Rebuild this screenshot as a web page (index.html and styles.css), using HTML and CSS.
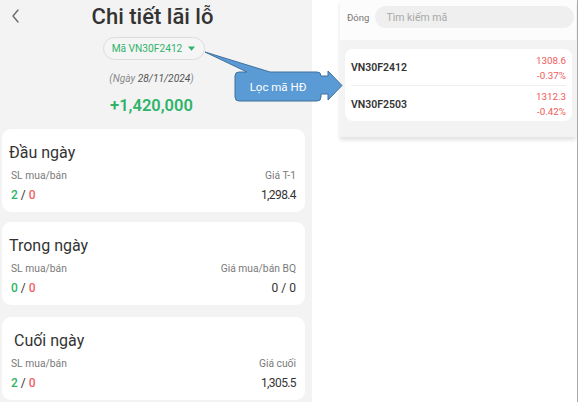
FILE: index.html
```html
<!DOCTYPE html>
<html lang="vi">
<head>
<meta charset="utf-8">
<title>Chi tiết lãi lỗ</title>
<link rel="stylesheet" href="styles.css">
</head>
<body>
<div class="page">
  <section class="left">
    <header class="head">
      <svg class="back" width="12" height="16" viewBox="0 0 12 16"><polyline points="8,1 3,7 8,13" fill="none" stroke="#6b6b6b" stroke-width="1.4" stroke-linecap="round" stroke-linejoin="round"/></svg>
      <h1 class="title">Chi tiết lãi lỗ</h1>
      <span class="spacer"></span>
    </header>
    <div class="pill-row">
      <div class="pill">Mã VN30F2412 <svg class="caret" width="7" height="5" viewBox="0 0 7 5"><polygon points="0,0.5 7,0.5 3.5,4.8" fill="#2fb36b"/></svg></div>
    </div>
    <p class="date">(Ngày <span class="date-val">28/11/2024</span>)</p>
    <p class="amount">+1,420,000</p>

    <div class="cards">
      <div class="card">
        <div class="card-title">Đầu ngày</div>
        <div class="row labels"><span>SL mua/bán</span><span>Giá T-1</span></div>
        <div class="row values"><span><b class="g">2</b> / <b class="r">0</b></span><span class="num">1,298.4</span></div>
      </div>
      <div class="card">
        <div class="card-title">Trong ngày</div>
        <div class="row labels"><span>SL mua/bán</span><span>Giá mua/bán BQ</span></div>
        <div class="row values"><span><b class="g">0</b> / <b class="r">0</b></span><span>0 / 0</span></div>
      </div>
      <div class="card card-last">
        <div class="card-title indent">Cuối ngày</div>
        <div class="row labels"><span>SL mua/bán</span><span>Giá cuối</span></div>
        <div class="row values"><span><b class="g">2</b> / <b class="r">0</b></span><span class="num">1,305.5</span></div>
      </div>
    </div>
  </section>

  <section class="right">
    <div class="search-bar">
      <span class="close">Đóng</span>
      <div class="search">Tìm kiếm mã</div>
    </div>
    <div class="list-wrap">
      <div class="list">
        <div class="item">
          <span class="code">VN30F2412</span>
          <div class="price"><span>1308.6</span><span>-0.37%</span></div>
        </div>
        <div class="item">
          <span class="code">VN30F2503</span>
          <div class="price"><span>1312.3</span><span>-0.42%</span></div>
        </div>
      </div>
    </div>
  </section>

  <div class="callout">
    <svg width="146" height="58" viewBox="0 0 146 58">
      <path d="M39,24 L47,24 L5,4 L70,24 L117,24 Q121,24 121,28 L128,28 L128,23 L142,37.5 L128,52 L128,46 L121,46 L121,49 Q121,53 117,53 L39,53 Q35,53 35,49 L35,28 Q35,24 39,24 Z" fill="#5b9bd5" stroke="#41719c" stroke-width="1"/>
    </svg>
    <span class="callout-text">Lọc mã HĐ</span>
  </div>
</div>
</body>
</html>
```

FILE: styles.css
```css
* { box-sizing: border-box; }
html, body { margin: 0; padding: 0; }
body {
  font-family: Roboto, "Noto Sans", sans-serif;
  background: #ffffff;
  color: #333;
}
.page {
  position: relative;
  width: 578px;
  height: 402px;
  display: flex;
  border-right: 1px solid #a9a9a9;
  overflow: hidden;
}
.left {
  width: 312px;
  height: 402px;
  background: #f3f3f3;
  display: flex;
  flex-direction: column;
}
.head {
  display: grid;
  grid-template-columns: 1fr auto 1fr;
  align-items: center;
  height: 34px;
  padding-right: 7px;
}
.back { margin-left: 10px; justify-self: start; }
.title {
  margin: 0;
  font-size: 22px;
  font-weight: 500;
  color: #333;
  line-height: 34px;
  white-space: nowrap;
}
.pill-row {
  display: flex;
  justify-content: center;
  margin-top: 3px;
  padding-right: 4px;
}
.pill {
  height: 23px;
  padding: 0 9px 0 8px;
  border: 1px solid #dcdcdc;
  border-radius: 12px;
  display: flex;
  align-items: center;
  gap: 6px;
  font-size: 10.2px;
  color: #2fb36b;
  background: #f5f5f5;
}
.caret { display: block; }
.date {
  margin: 12px 0 0;
  padding-right: 9px;
  text-align: center;
  font-size: 10.2px;
  line-height: 14px;
  font-style: italic;
  color: #8a8a8a;
}
.date-val { color: #555; }
.amount {
  margin: 9px 0 0;
  padding-right: 9px;
  text-align: center;
  font-size: 16.5px;
  line-height: 22px;
  font-weight: 600;
  color: #2fb36b;
}
.cards {
  margin-top: 12px;
  padding: 0 7px 0 2px;
  display: flex;
  flex-direction: column;
  gap: 10px;
}
.card {
  background: #fff;
  border-radius: 9px;
  padding: 12px 9px 8px 9px;
}
.card-last { margin-top: 2px; }
.card-title {
  font-size: 16px;
  line-height: 24px;
  color: #333;
  margin-left: -2px;
}
.card-title.indent { margin-left: 3px; }
.row {
  display: flex;
  justify-content: space-between;
}
.labels {
  margin-top: 1px;
  font-size: 10.3px;
  line-height: 20px;
  color: #7a7a7a;
}
.values {
  font-size: 12px;
  line-height: 18px;
  color: #333;
}
.values .num { letter-spacing: -0.6px; }
.values b { font-weight: 500; }
.g { color: #2fb36b; }
.r { color: #f06262; }

.right {
  margin-left: 28px;
  width: 236px;
  display: flex;
  flex-direction: column;
  align-self: flex-start;
  box-shadow: 0 3px 4px rgba(0,0,0,0.12);
}
.search-bar {
  height: 40px;
  background: #fcfcfc;
  display: flex;
  align-items: center;
  padding: 0 2px 6px 7px;
  gap: 6px;
}
.close {
  font-size: 9.5px;
  color: #777;
}
.search {
  flex: 1;
  height: 22px;
  border-radius: 11px;
  background: #efefef;
  font-size: 10.5px;
  color: #a8a8a8;
  display: flex;
  align-items: center;
  padding-left: 11px;
}
.list-wrap {
  background: #f3f3f3;
  padding: 9px 4px 16px 5px;
}
.list {
  background: #fff;
  border-radius: 8px;
  padding: 0 6px;
}
.item {
  height: 36px;
  display: flex;
  justify-content: space-between;
  align-items: center;
  padding-top: 1px;
}
.item + .item { border-top: 1px solid #eeeeee; }
.code {
  font-size: 10.5px;
  font-weight: 600;
  color: #333;
}
.price {
  display: flex;
  flex-direction: column;
  align-items: flex-end;
  font-size: 9.8px;
  line-height: 15px;
  color: #f05a5a;
}

.callout {
  position: absolute;
  left: 200px;
  top: 48px;
  width: 146px;
  height: 58px;
}
.callout svg { display: block; }
.callout-text {
  position: absolute;
  left: 35px;
  top: 24px;
  width: 86px;
  height: 29px;
  display: flex;
  align-items: center;
  justify-content: center;
  font-size: 11.5px;
  color: #fff;
}
```
